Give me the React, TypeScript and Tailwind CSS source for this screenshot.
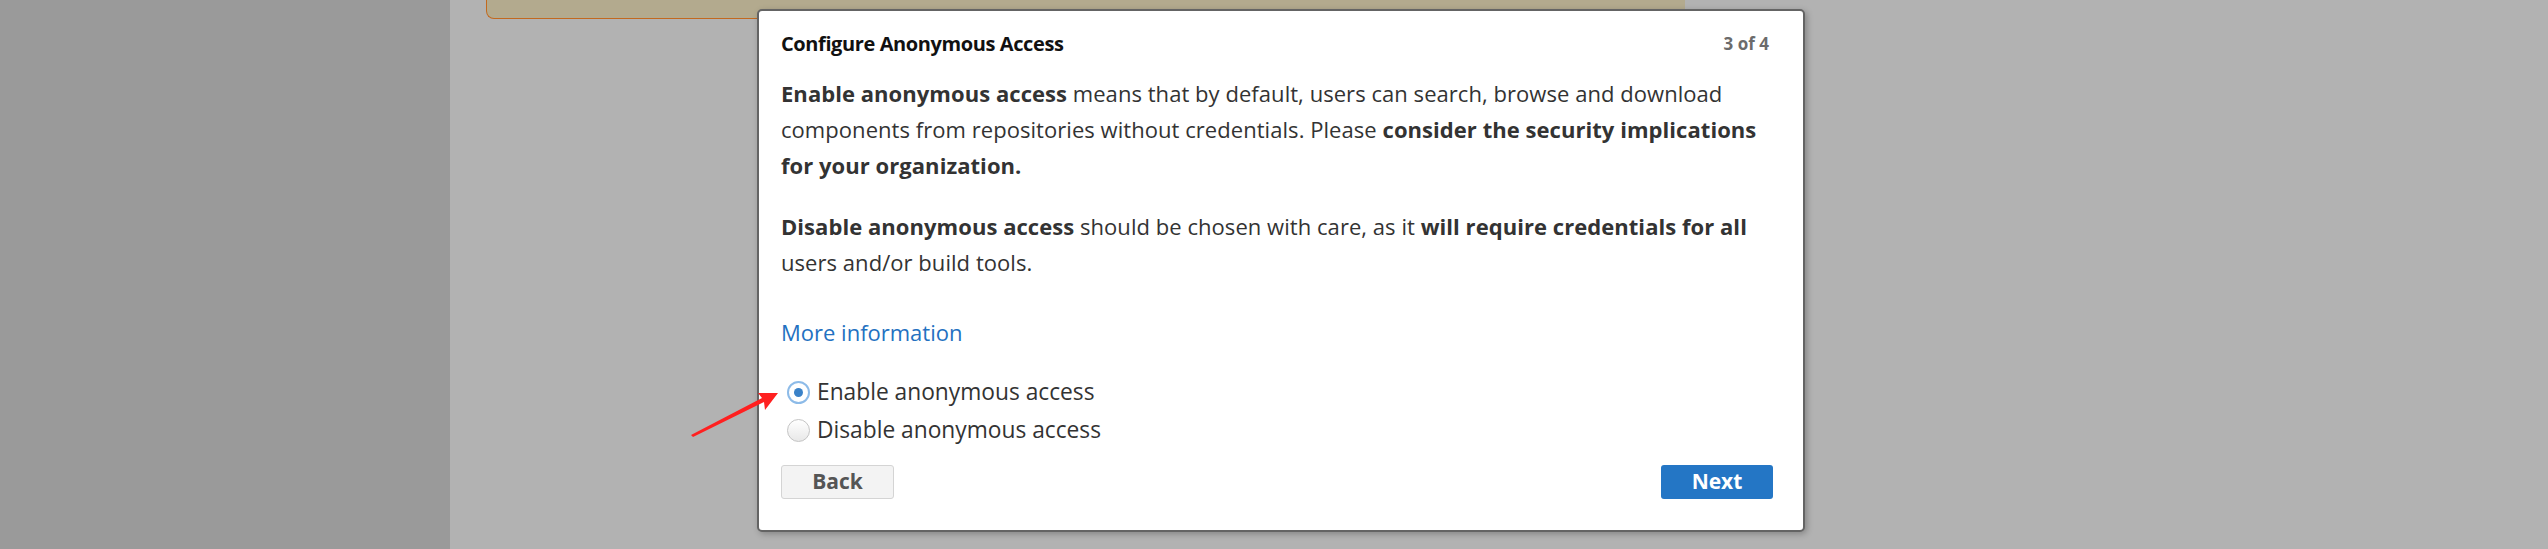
import React from "react";

const font = { fontFamily: "'Open Sans', Lato, sans-serif" };

export default function App() {
  return (
    <div className="relative flex h-[549px] w-[2548px] overflow-hidden" style={font}>
      <div className="h-full w-[450px] bg-[#9a9a9a]" />
      <div className="h-full flex-1 bg-[#b2b2b2]">
        <div className="ml-[36px] h-[19px] w-[1199px] rounded-bl-[8px] border-b border-l border-[#c2691f] bg-[#b3aa8e]" />
      </div>

      {/* Modal dialog */}
      <div className="absolute left-[757px] top-[9px] flex h-[523px] w-[1048px] flex-col rounded-[5px] border-2 border-[#646464] bg-white pl-[22px] pr-[30px] shadow-[2px_2px_6px_rgba(0,0,0,0.25)]">
        <div className="mt-[15px] flex h-[36px] items-center justify-between">
          <span className="text-[20px] font-bold tracking-[-0.4px] text-[#111]">Configure Anonymous Access</span>
          <span className="mr-[4px] text-[17px] font-bold text-[#6b6b6b]">3 of 4</span>
        </div>
        <p className="mt-[13px] text-[22px] leading-[36px] tracking-[0.05px] text-[#333]">
          <b>Enable anonymous access</b> means that by default, users can search, browse and download
          <br />
          components from repositories without credentials. Please <b>consider the security implications</b>
          <br />
          <b>for your organization.</b>
        </p>
        <p className="mt-[25px] text-[22px] leading-[36px] tracking-[0.05px] text-[#333]">
          <b>Disable anonymous access</b> should be chosen with care, as it <b>will require credentials for all</b>
          <br />
          users and/or build tools.
        </p>
        <a className="mt-[34px] block text-[22px] leading-[36px] text-[#2371c1]">More information</a>

        <div className="mt-[23px] flex flex-col">
          <label className="flex h-[38px] items-center gap-[7px] text-[22.75px] text-[#333]">
            <span className="ml-[6px] flex h-[23px] w-[23px] items-center justify-center rounded-full border-2 border-[#8dbbe8] bg-white">
              <span className="h-[9px] w-[9px] rounded-full bg-[#3a82c8]" />
            </span>
            Enable anonymous access
          </label>
          <label className="flex h-[38px] items-center gap-[7px] text-[22.75px] text-[#333]">
            <span className="ml-[6px] h-[23px] w-[23px] rounded-full border border-[#c4c4c4] bg-gradient-to-b from-white to-[#e8e8e8]" />
            Disable anonymous access
          </label>
        </div>

        <div className="mt-[16px] flex items-center justify-between">
          <button className="flex h-[34px] w-[113px] items-center justify-center rounded-[3px] border border-[#d4d4d4] bg-[#f3f3f3] text-[21px] font-bold text-[#555]">
            Back
          </button>
          <button className="flex h-[34px] w-[112px] items-center justify-center rounded-[3px] bg-[#2476c5] text-[21px] font-bold text-white">
            Next
          </button>
        </div>
      </div>

      {/* Red annotation arrow */}
      <svg className="absolute left-0 top-0" width="2548" height="549" viewBox="0 0 2548 549">
        <polygon points="691,435 762,398 758,393 778,393 765,410 764,402 693,437" fill="#ff2020" />
      </svg>
    </div>
  );
}
